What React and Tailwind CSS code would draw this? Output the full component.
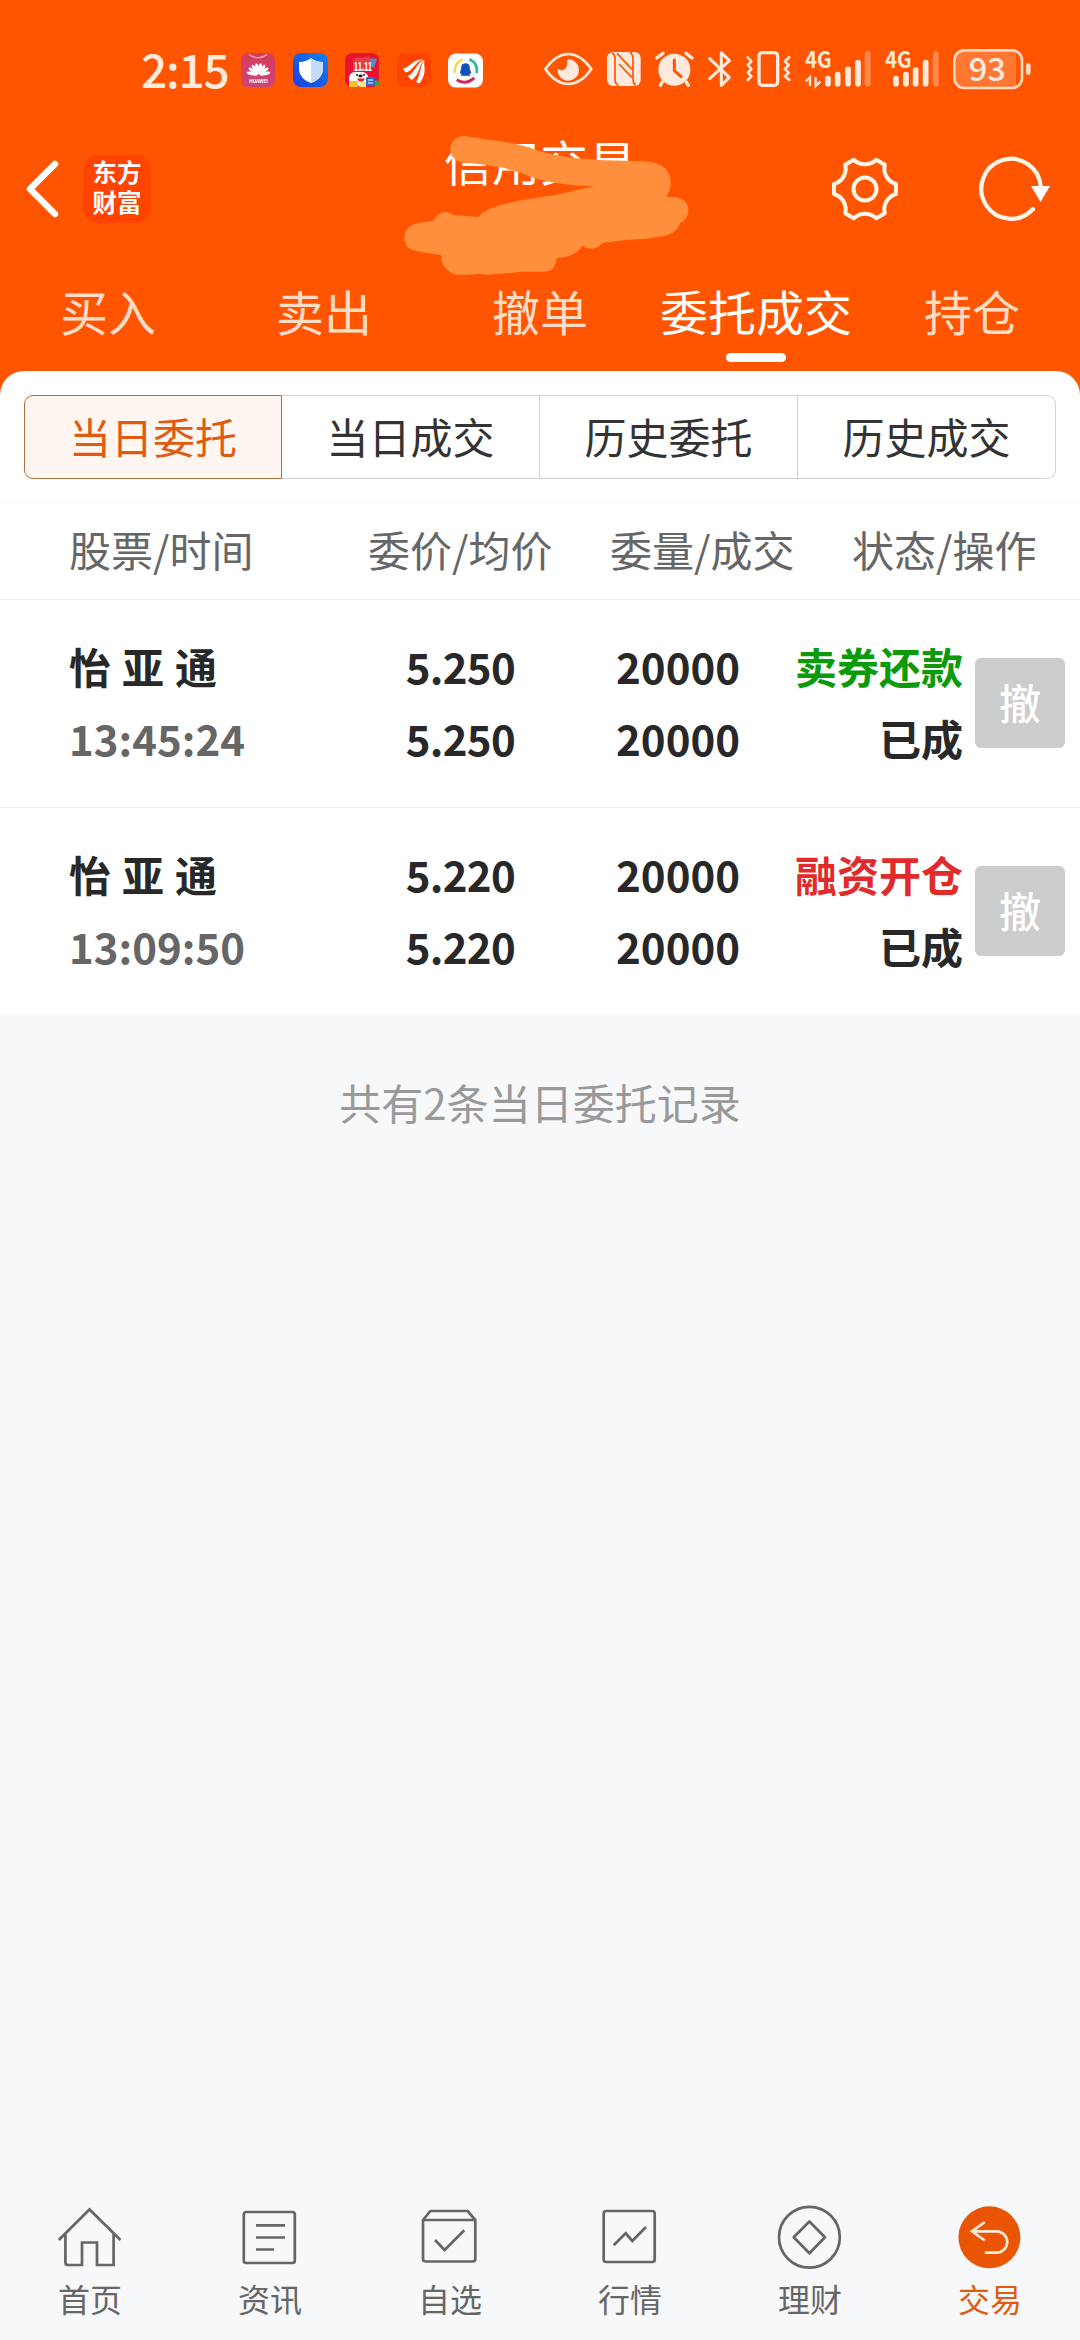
import React from "react";

const CREAM = "#ffeadd";

function AppBadges() {
  return (
    <div className="ml-[14px] flex items-center gap-[17.5px]">
      <svg width="34" height="34" viewBox="0 0 34 34">
        <defs>
          <linearGradient id="hw" x1="0" y1="0" x2="0" y2="1">
            <stop offset="0" stopColor="#d93a58" />
            <stop offset="1" stopColor="#c8467c" />
          </linearGradient>
        </defs>
        <rect width="34" height="34" rx="7" fill="url(#hw)" />
        <path d="M8 1.500Q17 8 26 1.500" fill="none" stroke="#ffb3b8" strokeWidth="1.200" />
        <g fill="#fff">
          {[-78, -54, -32, -11, 11, 32, 54, 78].map((a) => (
            <ellipse key={a} cx="17.500" cy="15.500" rx="1.700" ry="5.500" transform={`rotate(${a} 17.500 22)`} />
          ))}
        </g>
        <rect x="5" y="23.500" width="25" height="3" fill="#cb4475" />
        <text x="17.500" y="30" textAnchor="middle" fontSize="5" fontWeight="700" fill="#fff" textLength="19">HUAWEI</text>
      </svg>
      <svg width="35" height="34" viewBox="0 0 35 34">
        <defs>
          <linearGradient id="sh" x1="0" y1="1" x2="1" y2="0">
            <stop offset="0" stopColor="#1a3fe0" />
            <stop offset="1" stopColor="#1280ee" />
          </linearGradient>
        </defs>
        <rect width="35" height="34" rx="8" fill="url(#sh)" />
        <path d="M18 5Q23 9 30 9V17Q29 26 18 30Q7 26 6 17V9Q13 9 18 5Z" fill="#fff" />
        <path d="M18 5Q23 9 30 9V17Q29 26 18 30Z" fill="#c5dcf8" />
      </svg>
      <svg width="34" height="34" viewBox="0 0 34 34">
        <rect width="34" height="34" rx="7" fill="#e8132f" />
        <path d="M24 5l8 1-3 9-5-3z" fill="#4d8ed0" />
        <path d="M8 9Q9 3 16 5L25 3L26 18H8Z" fill="#f0383f" />
        <path d="M4 28Q3 19 11 19H18Q24 20 24 29L12 33Z" fill="#fff" />
        <text x="9" y="17.500" fontSize="12" fontWeight="800" fill="#fff" textLength="18" lengthAdjust="spacingAndGlyphs">11.11</text>
        <circle cx="12" cy="22" r="1" fill="#222" />
        <circle cx="19" cy="22" r="1" fill="#222" />
        <ellipse cx="15.500" cy="23" rx="2.200" ry="1.400" fill="#222" />
        <path d="M12 25.500h8l-2 3h-4z" fill="#d22" />
        <rect x="4" y="28" width="9" height="6" fill="#fbc02a" />
        <rect x="14" y="29" width="7" height="5" fill="#ffe08a" />
        <rect x="21" y="24" width="9" height="9" rx="1" fill="#2f6ccf" />
        <path d="M23 27h5M23 30h5" stroke="#fff" />
        <path d="M30 27l4 1v4l-4 2z" fill="#4a9a45" />
      </svg>
      <svg width="34" height="34" viewBox="0 0 34 34">
        <rect width="34" height="34" rx="7" fill="#ff4300" />
        <path d="M6 15.500C12 15 15 7 26 6C18 9 16 18 9 19.500Q7 18 6 15.500Z" fill="#fff" />
        <path d="M11 23C18 20 20 9 27 6.500C22 12 23 21 15 27Q12 25 11 23Z" fill="#fff" />
        <path d="M19 29C24 22 23 11 27.500 7C26 13 31 18 23 30Q20 30.500 19 29Z" fill="#fff" />
      </svg>
      <svg width="35" height="35" viewBox="0 0 36 35">
        <rect width="36" height="35" rx="8" fill="#fff" />
        <path d="M7 20Q6 10 15 6" fill="none" stroke="#f6d94a" strokeWidth="2.500" />
        <path d="M22 6Q31 10 29.500 20" fill="none" stroke="#35b7a0" strokeWidth="2.800" />
        <path d="M9 27Q18 33 27 25" fill="none" stroke="#d0245c" strokeWidth="3" />
        <path d="M18 10C22 10 22.500 13 22.500 16L24 20L22 21L23 23H13L14 21L12 20L13.500 16C13.500 13 14 10 18 10Z" fill="#1152b8" />
      </svg>
    </div>
  );
}

function StatusIcons() {
  return (
    <div className="ml-[52.5px] flex h-[60px]">
      <svg width="60" height="60" viewBox="15 0 180 180">
        <path d="M43 87Q75 42 112 42T181 87Q150 132 112 132T43 87Z" fill="none" stroke={CREAM} strokeWidth="8" strokeLinejoin="round" />
        <path d="M112 58A32 32 0 1 1 80 86Q92 96 102 86T108 62Z" fill={CREAM} />
      </svg>
      <svg width="50" height="60" viewBox="195 0 150 180">
        <rect x="228" y="36" width="101" height="102" rx="18" fill={CREAM} />
        <path d="M243 38Q252 42 252 54V118Q252 132 264 138M258 40L303 88M264 72L303 112M314 136Q306 130 306 118V58Q306 42 296 36" stroke="#ff5500" strokeWidth="5" fill="none" />
      </svg>
      <svg width="55" height="60" viewBox="345 0 165 180">
        <circle cx="430" cy="89" r="48" fill={CREAM} />
        <path d="M377 54L396 40M465 40L483 54M394 126L388 136M466 126L472 136" stroke={CREAM} strokeWidth="10" strokeLinecap="round" />
        <path d="M430 60V92L450 110" fill="none" stroke="#ff5500" strokeWidth="9" strokeLinecap="round" strokeLinejoin="round" />
      </svg>
      <svg width="43" height="60" viewBox="510 0 129 180">
        <path d="M536 56L595 112L571 136V38L595 62L536 116" fill="none" stroke={CREAM} strokeWidth="9" strokeLinecap="round" strokeLinejoin="round" />
      </svg>
      <svg width="55" height="60" viewBox="639 0 165 180">
        <rect x="684" y="38" width="56" height="98" rx="10" fill="none" stroke={CREAM} strokeWidth="10" />
        <path d="M650 52L661 64L651 75L661 87L651 98L661 109L650 120M775 52L762 64L773 75L762 87L773 98L762 109L775 120" fill="none" stroke={CREAM} strokeWidth="8" strokeLinecap="round" strokeLinejoin="round" />
      </svg>
      <svg width="80" height="60" viewBox="804 0 240 180">
        <text x="822" y="84" fontSize="68" fontWeight="700" fill={CREAM} textLength="80" lengthAdjust="spacingAndGlyphs">4G</text>
        <path d="M837 138V112L824 124M854 112V138L868 124" fill="none" stroke={CREAM} strokeWidth="7" />
        <path d="M891 116V131M920 104V131M951 88V131M981 68V131" stroke={CREAM} strokeWidth="17" strokeLinecap="round" />
        <path d="M1010 42V131" stroke="#ff884c" strokeWidth="18" strokeLinecap="round" />
      </svg>
      <svg width="70" height="60" viewBox="1044 0 210 180">
        <text x="1062" y="84" fontSize="68" fontWeight="700" fill={CREAM} textLength="80" lengthAdjust="spacingAndGlyphs">4G</text>
        <path d="M1095 116V131M1125 104V131M1154 90V131M1184 68V131" stroke={CREAM} strokeWidth="17" strokeLinecap="round" />
        <path d="M1214 42V131" stroke="#ff884c" strokeWidth="18" strokeLinecap="round" />
      </svg>
      <svg width="90" height="60" viewBox="1254 0 270 180">
        <path d="M1300 34H1455V141H1300Q1273 141 1273 111V64Q1273 34 1300 34Z" fill="#ff7733" />
        <rect x="1270" y="31" width="203" height="113" rx="30" fill="none" stroke="#ffd9c2" strokeWidth="8" />
        <path d="M1492 76V98" stroke="#ffd9c2" strokeWidth="14" strokeLinecap="round" />
        <text x="1369" y="122" textAnchor="middle" fontSize="98" fontWeight="500" fill={CREAM}>93</text>
      </svg>
    </div>
  );
}

function StatusBar() {
  return (
    <div className="flex h-[60px] items-center pl-[141px]">
      <span className="-mt-[5px] block w-[86px] whitespace-nowrap text-[46px] font-medium leading-[60px] tracking-[-1.2px] text-[#ffeadd]">2:15</span>
      <AppBadges />
      <StatusIcons />
    </div>
  );
}

function GearIcon() {
  const step = "A16 16 0 0 0";
  return (
    <svg width="70" height="70" viewBox="-35 -35 70 70" fill="none" stroke="#fff6ea" strokeWidth="4" strokeLinejoin="round">
      <path
        d={`M-11.200 -29.300${step} 11.200 -29.300L19.800 -24.300${step} 31 -5V5${step} 19.800 24.300L11.200 29.300${step} -11.200 29.300L-19.800 24.300${step} -31 5V-5${step} -19.800 -24.300Z`}
      />
      <circle r="11.500" />
    </svg>
  );
}

function Header() {
  return (
    <div className="relative flex h-[138px] items-center">
      <svg className="ml-[24px]" width="36" height="62" viewBox="0 0 36 62">
        <path d="M31 6L6 31L31 56" fill="none" stroke="#fff" strokeWidth="6.500" strokeLinecap="round" strokeLinejoin="round" />
      </svg>
      <div className="ml-[23px] flex h-[68px] w-[68px] flex-col items-center justify-center rounded-[15px] bg-[#ff4300] font-['Liberation_Sans','Noto_Sans_CJK_SC',sans-serif] text-[24.5px] font-bold leading-[30px] text-white">
        <span>东方</span>
        <span>财富</span>
      </div>
      <div className="-mt-[59px] ml-[293px] w-[192px] whitespace-nowrap text-[48px] leading-[60px] text-white">信用交易</div>
      <div className="ml-[194px]">
        <GearIcon />
      </div>
      <svg className="ml-[76px]" width="80" height="70" viewBox="-35 -35 80 70">
        <path d="M22 20A29.700 30 0 1 1 29.700 -2" fill="none" stroke="#fff6ea" strokeWidth="4.200" strokeLinecap="round" />
        <path d="M20 -3H39L29.500 13Z" fill="#fff" />
      </svg>
      <svg className="absolute left-[390px] top-[5px]" width="310" height="160" viewBox="0 0 930 480">
        <path
          d="M222 33L350 52Q400 60 440 76Q490 92 545 98L640 106L765 109Q842 114 842 175Q842 200 828 216H855Q895 222 895 258Q895 280 870 295Q858 332 805 335L770 341L715 344L638 353Q622 371 605 371Q590 371 577 362Q560 395 500 399Q498 440 460 440H388Q340 448 315 446Q295 452 270 447Q240 450 205 449Q185 447 172 434Q153 420 153 390Q110 386 70 376Q43 366 43 338Q45 300 90 293L130 288Q145 260 168 261Q180 262 190 270L265 276Q285 250 345 237Q390 224 440 218L500 209L612 183Q560 184 515 176Q450 168 400 146L335 127Q270 116 210 111Q181 100 181 72Q186 34 222 33Z"
          fill="#ff8f3d"
        />
      </svg>
    </div>
  );
}

const tabs = [
  { label: "买入" },
  { label: "卖出" },
  { label: "撤单" },
  { label: "委托成交", active: true },
  { label: "持仓" },
];

function Tabs() {
  return (
    <div className="grid h-[113px] grid-cols-5">
      {tabs.map((t) => (
        <div key={t.label} className="flex flex-col items-center pt-[22px]">
          <span className={`whitespace-nowrap text-[48px] leading-[60px] ${t.active ? "text-white" : "text-[#ffdcc5]"}`}>{t.label}</span>
          {t.active && <span className="mt-[13px] h-[9px] w-[60px] rounded-full bg-white" />}
        </div>
      ))}
    </div>
  );
}

function Segments() {
  return (
    <div className="mx-[24px] mt-[24px] grid h-[84px] grid-cols-4 text-center text-[42px] leading-[79px] text-[#333]">
      <div className="rounded-l-[9px] border border-[#b0703c] bg-[#fff6f2] text-[#e05a10]">当日委托</div>
      <div className="border-y border-r border-[#cfd3d3]">当日成交</div>
      <div className="border-y border-r border-[#cfd3d3]">历史委托</div>
      <div className="rounded-r-[9px] border-y border-r border-[#cfd3d3]">历史成交</div>
    </div>
  );
}

function TableHead() {
  return (
    <div className="mt-[23px] flex h-[98px] items-center whitespace-nowrap border-y border-t-[#f5f5f5] border-b-[#ececec] pb-[4px] text-[42px] leading-[60px] text-[#666]">
      <span className="ml-[69px] w-[299px]">股票/时间</span>
      <span className="w-[242px]">委价/均价</span>
      <span className="w-[242px]">委量/成交</span>
      <span>状态/操作</span>
    </div>
  );
}

const orders = [
  { time: "13:45:24", price: "5.250", qty: "20000", kind: "卖券还款", tone: "text-[#0a9a0a]" },
  { time: "13:09:50", price: "5.220", qty: "20000", kind: "融资开仓", tone: "text-[#e12a2a]" },
];

function OrderRow({ order, last }) {
  return (
    <div
      className={`flex items-center whitespace-nowrap pb-[3px] text-[42px] font-bold leading-[72px] text-[#282828] ${
        last ? "h-[207px]" : "h-[208px] border-b border-[#ececec]"
      }`}
    >
      <div className="ml-[69px] w-[245px]">
        <div className="[word-spacing:1.5px]">怡 亚 通</div>
        <div className="text-[#666]">{order.time}</div>
      </div>
      <div className="w-[201px] text-right tracking-[-0.7px]">
        <div>{order.price}</div>
        <div>{order.price}</div>
      </div>
      <div className="w-[225px] text-right">
        <div>{order.qty}</div>
        <div>{order.qty}</div>
      </div>
      <div className="w-[223px] text-right">
        <div className={order.tone}>{order.kind}</div>
        <div>已成</div>
      </div>
      <div className="ml-[12px] mt-[1px] h-[90px] w-[90px] rounded-[6px] bg-[#ccc] text-center font-medium leading-[87px] text-white">撤</div>
    </div>
  );
}

const navItems = [
  {
    label: "首页",
    icon: <path d="M0.800 35L31.500 4.500L62.500 35M7.400 28V57.500Q7.400 60 10 60H24V37.500H39V60H55.600V28" />,
  },
  {
    label: "资讯",
    icon: (
      <>
        <rect x="5.800" y="7" width="51" height="51" rx="2.500" />
        <path d="M18 20.300H47M18 32.500H47M18 44.500H36" />
      </>
    ),
  },
  {
    label: "自选",
    icon: (
      <>
        <path d="M5 15L12.400 6H49.600L57.300 15V54Q57.300 56.500 54.500 56.500H8Q5 56.500 5 54ZM5 15H57.300" strokeLinejoin="round" />
        <path d="M17 35L26.600 45L46.300 25.300" />
      </>
    ),
  },
  {
    label: "行情",
    icon: (
      <>
        <rect x="5.700" y="6" width="51" height="51" rx="2.500" />
        <path d="M15.700 40.300L27.700 28.300L34.300 36L48 22" />
      </>
    ),
  },
  {
    label: "理财",
    icon: (
      <>
        <circle cx="31.400" cy="32.300" r="30.400" />
        <path d="M31.400 16.500L47 32.300L31.400 48.200L15.700 32.300Z" strokeLinejoin="round" />
      </>
    ),
  },
  {
    label: "交易",
    active: true,
    icon: (
      <>
        <circle cx="31.400" cy="32.300" r="31" fill="#ea5504" stroke="none" />
        <path d="M26.800 17L14 26.300L26.800 35.500M14 26.300H38.500A10.700 10.700 0 0 1 38.500 47.700H26.900" stroke="#ffe9d6" />
      </>
    ),
  },
];

function BottomNav() {
  return (
    <div className="mt-auto grid h-[135px] grid-cols-6">
      {navItems.map((n) => (
        <div key={n.label} className={`flex flex-col items-center ${n.active ? "text-[#e05a10]" : "text-[#666]"}`}>
          <svg className="overflow-visible" width="64" height="64" viewBox="0 0 64 64" fill="none" stroke="currentColor" strokeWidth="2.700">
            {n.icon}
          </svg>
          <span className="mt-[9px] text-[32px] leading-[40px]">{n.label}</span>
        </div>
      ))}
    </div>
  );
}

export default function App() {
  return (
    <div className="flex h-[2340px] w-[1080px] flex-col overflow-hidden bg-[#f7f8fa] font-['Noto_Sans_CJK_SC',sans-serif]">
      <div className="h-[395px] shrink-0 bg-[#ff5500] pt-[40px]">
        <StatusBar />
        <div className="h-[20px]" />
        <Header />
        <Tabs />
      </div>
      <div className="-mt-[24px] shrink-0 rounded-t-[24px] bg-white">
        <Segments />
        <TableHead />
        {orders.map((o, i) => (
          <OrderRow key={o.time} order={o} last={i === orders.length - 1} />
        ))}
      </div>
      <div className="pt-[57px] text-center text-[42px] leading-[60px] text-[#999]">共有2条当日委托记录</div>
      <BottomNav />
    </div>
  );
}
